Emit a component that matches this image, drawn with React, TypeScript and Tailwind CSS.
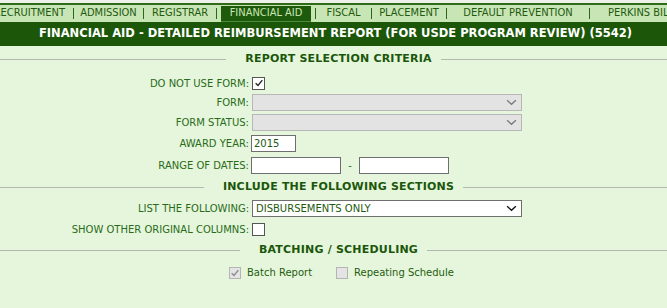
import React from 'react';

const tabs = [
  { label: 'RECRUITMENT', w: 'w-[73px]', first: true },
  { label: 'ADMISSION', w: 'w-[69px]' },
  { label: 'REGISTRAR', w: 'w-[72px]' },
  { label: 'FINANCIAL AID', w: 'w-[98px]', active: true },
  { label: 'FISCAL', w: 'w-[55px]' },
  { label: 'PLACEMENT', w: 'w-[74px]' },
  { label: 'DEFAULT PREVENTION', w: 'w-[142px]' },
  { label: 'PERKINS BILLING', w: 'w-[120px]' },
];

const Check = ({ color }: { color: string }) => (
  <svg viewBox="0 0 12 12" className="w-[10px] h-[10px]">
    <path d="M2 6.2 L4.8 9 L10 2.6" fill="none" stroke={color} strokeWidth="1.6" />
  </svg>
);

const Chevron = ({ color }: { color: string }) => (
  <svg viewBox="0 0 12 8" className="w-[11px] h-[7px]">
    <path d="M1 1.5 L6 6 L11 1.5" fill="none" stroke={color} strokeWidth="1.6" />
  </svg>
);

const SectionHeader = ({ title, h }: { title: string; h: string }) => (
  <div className={`flex items-center ${h}`}>
    <div className="flex-1 h-px bg-[#b4b9b0]" />
    <div className="pl-[19px] pr-[9px] text-[11px] font-bold text-[#1b560b] tracking-[0.2px]">{title}</div>
    <div className="flex-1 h-px bg-[#b4b9b0]" />
  </div>
);

const Row = ({ label, children, cls }: { label: string; children: React.ReactNode; cls: string }) => (
  <div className={`flex items-center ${cls}`}>
    <div className="w-[249px] text-right text-[10px] text-[#2a6b19]">{label}</div>
    <div className="flex items-center pl-[3px]">{children}</div>
  </div>
);

export default function App() {
  return (
    <div
      className="w-[667px] h-[308px] overflow-hidden bg-[#e5f6dc]"
      style={{ fontFamily: '"DejaVu Sans", Verdana, sans-serif' }}
    >
      {/* Top strip */}
      <div className="h-[3px] bg-[#eef0ec]" />
      <div className="h-[2px] bg-[#2f6a17]" />

      {/* Module tabs */}
      <div className="h-[17px] bg-[#c8e5b5] flex items-center overflow-hidden whitespace-nowrap">
        <div
          className="flex items-center text-[11px] text-[#1f5a0e]"
          style={{ fontFamily: '"DejaVu Sans Condensed", "DejaVu Sans", sans-serif' }}
        >
          {tabs.map((t, i) => (
            <React.Fragment key={t.label}>
              {i > 0 && <div className="w-px h-[11px] bg-[#2a6618]" />}
              <div
                className={`${t.w} shrink-0 h-[17px] flex items-center ${
                  t.first ? 'justify-end pr-[8px]' : 'justify-center'
                }`}
              >
                {t.active ? (
                  <div className="w-[90px] h-[16px] mt-[1px] bg-[#1d5a0b] text-[#cbe7b7] flex items-center justify-center border-b border-[#4c8a37]">
                    {t.label}
                  </div>
                ) : (
                  <span>{t.label}</span>
                )}
              </div>
            </React.Fragment>
          ))}
        </div>
      </div>

      {/* Title bar */}
      <div className="h-[24px] bg-[#1c5709] flex items-center justify-center pl-[4px] text-white font-bold text-[11.5px] whitespace-nowrap">
        FINANCIAL AID - DETAILED REIMBURSEMENT REPORT (FOR USDE PROGRAM REVIEW) (5542)
      </div>

      {/* Report criteria */}
      <SectionHeader title="REPORT SELECTION CRITERIA" h="h-[26px]" />

      <Row label="DO NOT USE FORM:" cls="h-[16px] mt-[3px]">
        <div className="w-[13px] h-[13px] bg-white border border-[#555] flex items-center justify-center">
          <Check color="#222" />
        </div>
      </Row>

      <Row label="FORM:" cls="h-[17px] mt-[3px]">
        <div className="w-[270px] h-[17px] bg-[#e3e3e3] border border-[#b7b7b7] flex items-center justify-end pr-[4px]">
          <Chevron color="#7a7a7a" />
        </div>
      </Row>

      <Row label="FORM STATUS:" cls="h-[17px] mt-[3px]">
        <div className="w-[270px] h-[17px] bg-[#e3e3e3] border border-[#b7b7b7] flex items-center justify-end pr-[4px]">
          <Chevron color="#7a7a7a" />
        </div>
      </Row>

      <Row label="AWARD YEAR:" cls="h-[17px] mt-[4px]">
        <input
          readOnly
          value="2015"
          className="w-[45px] h-[17px] -ml-px bg-white border border-[#6f6f6f] px-[2px] text-[10px] text-[#1d5a0b] outline-none"
        />
      </Row>

      <Row label="RANGE OF DATES:" cls="h-[17px] mt-[5px]">
        <input readOnly className="w-[90px] h-[17px] -ml-px bg-white border border-[#6f6f6f] outline-none" />
        <span className="w-[18px] text-center text-[10px] text-[#2a6b19]">-</span>
        <input readOnly className="w-[90px] h-[17px] bg-white border border-[#6f6f6f] outline-none" />
      </Row>

      {/* Sections */}
      <SectionHeader title="INCLUDE THE FOLLOWING SECTIONS" h="h-[26px]" />

      <Row label="LIST THE FOLLOWING:" cls="h-[17px]">
        <div className="w-[270px] h-[17px] bg-white border border-[#6f6f6f] flex items-center justify-between pl-[3px] pr-[4px] text-[10px] text-[#1d5a0b]">
          <span>DISBURSEMENTS ONLY</span>
          <Chevron color="#111" />
        </div>
      </Row>

      <Row label="SHOW OTHER ORIGINAL COLUMNS:" cls="h-[17px] mt-[4px]">
        <div className="w-[13px] h-[13px] bg-white border border-[#555]" />
      </Row>

      {/* Batching */}
      <SectionHeader title="BATCHING / SCHEDULING" h="h-[24px]" />

      <div className="h-[17px] mt-[2px] flex items-center text-[10px] text-[#1f5d0e]">
        <div className="ml-[229px] w-[12px] h-[12px] bg-[#e4e4e4] border border-[#b5b5b5] flex items-center justify-center">
          <Check color="#8a8a8a" />
        </div>
        <span className="ml-[6px]">Batch Report</span>
        <div className="ml-[24px] w-[12px] h-[12px] bg-[#e4e4e4] border border-[#b5b5b5]" />
        <span className="ml-[6px]">Repeating Schedule</span>
      </div>
    </div>
  );
}
